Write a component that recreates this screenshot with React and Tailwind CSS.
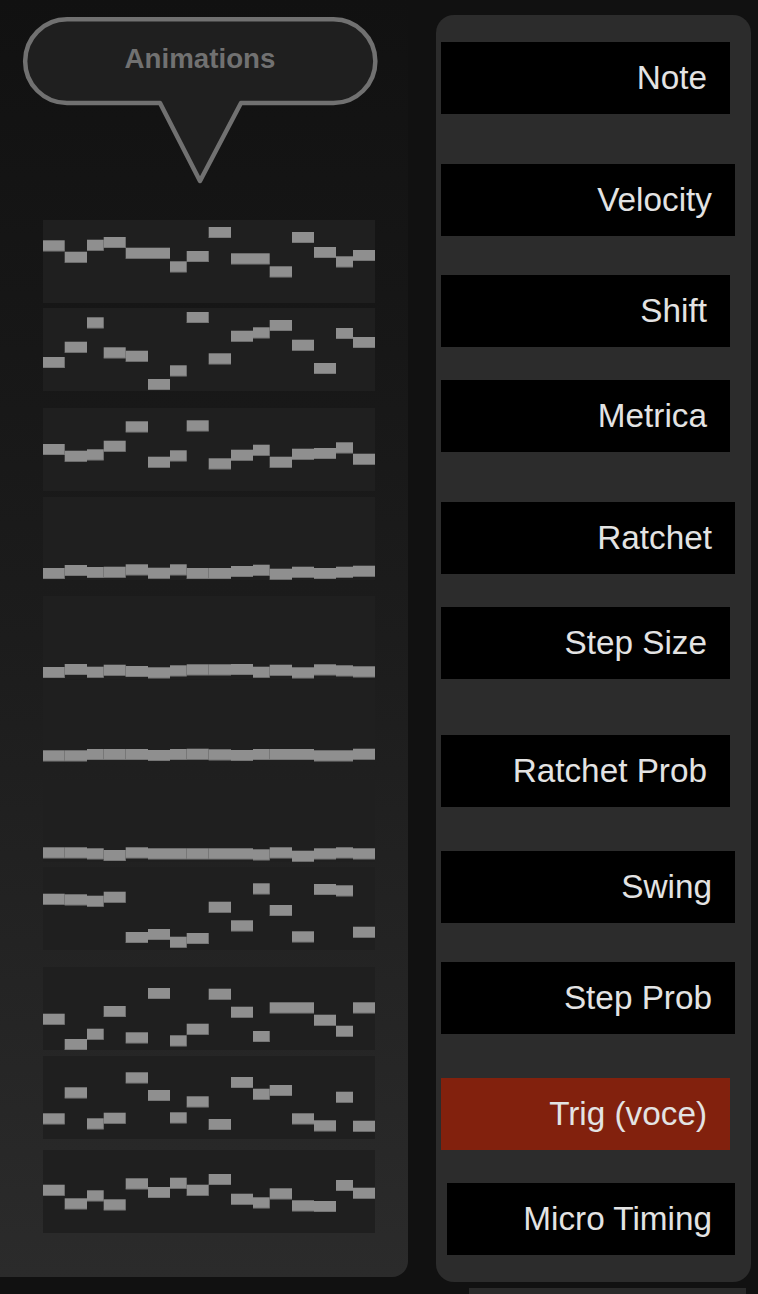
import React from "react";

const EDGES = [0, 21.7, 44, 60.7, 82.7, 105, 127, 143.7, 165.7, 188, 210, 226.7, 249, 271, 293, 310, 332];

const GRAPHS = [
  { mt: "mt-0", v: [20.3, 31.7, 19.7, 17, 27.7, 27.7, 41.3, 31, 7, 33.3, 33.3, 46.3, 12, 27, 36.3, 30] },
  { mt: "mt-[5px]", v: [49, 33.7, 9.3, 39.3, 42.7, 71, 57.3, 4, 45.3, 22.7, 19.3, 12, 31.7, 55, 20, 29] },
  { mt: "mt-[17px]", v: [36, 42.7, 41.3, 32.7, 13.3, 48.7, 42.3, 12.3, 50.3, 41.7, 36.7, 48.7, 40.7, 40, 34.3, 45.7] },
  { mt: "mt-[6px]", v: [71, 68, 70, 69.7, 67.3, 70.7, 67.3, 71, 71, 69, 67.7, 71.7, 69.7, 71, 69.7, 68.7] },
  { mt: "mt-[16px]", v: [71, 68, 70.7, 68.7, 70, 71.3, 69.3, 68.3, 68.3, 68, 70.7, 68.7, 71.3, 68.3, 69.3, 70.3] },
  { mt: "mt-[1px]", v: [70.3, 70.3, 69, 69, 69, 70, 69, 68.7, 69.3, 70, 69, 69, 69, 70.3, 70.3, 68.7] },
  { mt: "mt-[16px]", v: [68.3, 68.3, 69.3, 71, 68.3, 69.3, 69.3, 69.3, 69.3, 69.3, 70.3, 68.3, 71.7, 69.3, 68.3, 69.3] },
  { mt: "mt-[5px]", v: [26.7, 27.3, 28.7, 24.7, 65, 62, 69.7, 66, 34.7, 53.3, 16.3, 38, 64.3, 17, 18.3, 59.7] },
  { mt: "mt-[17px]", v: [46.7, 72, 61.7, 39, 65.3, 21, 68.3, 56.7, 21.7, 39.7, 64, 35.3, 35.3, 47.7, 58.7, 35.3] },
  { mt: "mt-[6px]", v: [57.3, 31.3, 62.3, 56.7, 16.3, 34, 56.3, 40.3, 63, 21, 32.7, 29, 57.3, 64.3, 35.7, 64.7] },
  { mt: "mt-[11px]", v: [34.7, 48.3, 40.3, 49.3, 28.3, 37, 27.7, 34.7, 24, 43.7, 47.3, 38.3, 50.3, 51, 30, 37.7] },
];

const BUTTONS = [
  { label: "Note", cls: "mt-[27px] ml-[5px] w-[289px] bg-black" },
  { label: "Velocity", cls: "mt-[50px] ml-[5px] w-[294px] bg-black" },
  { label: "Shift", cls: "mt-[39px] ml-[5px] w-[289px] bg-black" },
  { label: "Metrica", cls: "mt-[33px] ml-[5px] w-[289px] bg-black" },
  { label: "Ratchet", cls: "mt-[50px] ml-[5px] w-[294px] bg-black" },
  { label: "Step Size", cls: "mt-[33px] ml-[5px] w-[289px] bg-black" },
  { label: "Ratchet Prob", cls: "mt-[56px] ml-[5px] w-[289px] bg-black" },
  { label: "Swing", cls: "mt-[44px] ml-[5px] w-[294px] bg-black" },
  { label: "Step Prob", cls: "mt-[39px] ml-[5px] w-[294px] bg-black" },
  { label: "Trig (voce)", cls: "mt-[44px] ml-[5px] w-[289px] bg-[#82210d]" },
  { label: "Micro Timing", cls: "mt-[33px] ml-[11px] w-[288px] bg-black" },
];

function Graph({ values, mt }) {
  return (
    <div className={`${mt} h-[83px] w-[332px] bg-[#1f1f1f]`}>
      <svg width="332" height="83" viewBox="0 0 332 83" className="block">
        {values.map((y, i) => (
          <g key={i}>
            <rect x={EDGES[i]} y={y} width={EDGES[i + 1] - EDGES[i]} height="11" fill="#8f8f8f" />
            <rect x={EDGES[i]} y={y + 10.3} width={EDGES[i + 1] - EDGES[i]} height="0.7" fill="#6e6e6e" />
          </g>
        ))}
      </svg>
    </div>
  );
}

function Bubble() {
  return (
    <div className="relative h-[190px] w-[400px]">
      <svg width="400" height="190" viewBox="0 0 400 190" className="absolute inset-0">
        <path
          d="M67,19.3 H333.5 A41.85 41.85 0 0 1 333.5,103 H241 L200,181 L160,103 H67 A41.85 41.85 0 0 1 67,19.3 Z"
          fill="#1f1f1f"
          stroke="#717171"
          strokeWidth="4.5"
          strokeLinejoin="round"
        />
      </svg>
      <div className="relative pt-[45px] text-center text-[27.7px] leading-[27px] font-bold text-[#717171]">
        Animations
      </div>
    </div>
  );
}

export default function App() {
  return (
    <div
      className="flex h-[1294px] w-[758px] overflow-hidden bg-[#111111]"
      style={{ fontFamily: '"Liberation Sans", Arial, sans-serif' }}
    >
      <div className="flex h-[1277px] w-[408px] shrink-0 flex-col rounded-br-[16px] bg-gradient-to-b from-[#111111] via-[#1c1c1c] to-[#2b2b2b] pb-[44px]">
        <Bubble />
        <div className="ml-[43px] mt-[30px] flex flex-col">
          {GRAPHS.map((g, i) => (
            <Graph key={i} values={g.v} mt={g.mt} />
          ))}
        </div>
      </div>
      <div className="ml-[28px] flex flex-col">
        <div className="mt-[15px] flex h-[1268px] w-[315px] flex-col rounded-[18px] bg-[#2c2c2c]">
          {BUTTONS.map((b) => (
            <div
              key={b.label}
              className={`${b.cls} flex h-[72px] items-center justify-end pr-[23px] text-[33.3px] text-[#e3e3e3]`}
            >
              {b.label}
            </div>
          ))}
        </div>
        <div className="ml-[33px] mt-[6px] h-[6px] w-[277px] bg-[#2a2a2a]" />
      </div>
    </div>
  );
}
